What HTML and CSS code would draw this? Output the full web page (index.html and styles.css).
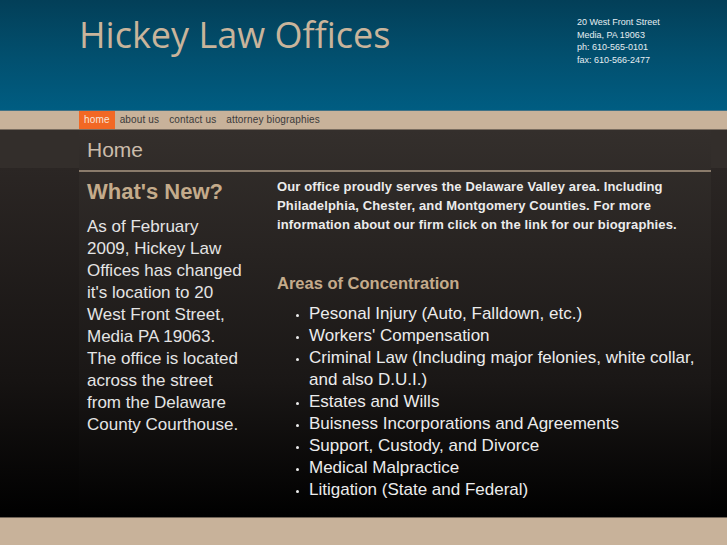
FILE: index.html
```html
<!DOCTYPE html>
<html lang="en">
<head>
    <meta charset="UTF-8">
    <meta name="viewport" content="width=device-width, initial-scale=1.0">
    <title>Hickey Law Offices</title>
    <link rel="stylesheet" href="styles.css">
</head>
<body>

<div class="header">
    <div class="wrap header-inner">
        <h1>Hickey Law Offices</h1>
        <div class="address">
            20 West Front Street<br>
            Media, PA 19063<br>
            ph: 610-565-0101<br>
            fax: 610-566-2477
        </div>
    </div>
</div>

<div class="nav">
    <ul class="wrap menu">
        <li class="active"><a href="#">home</a></li>
        <li><a href="#">about us</a></li>
        <li><a href="#">contact us</a></li>
        <li><a href="#">attorney biographies</a></li>
    </ul>
</div>

<div class="main">
    <div class="wrap content">
        <h2 class="page-title">Home</h2>
        <div class="columns">
            <div class="news">
                <h3>What's New?</h3>
                <p>As of February<br>2009, Hickey Law Offices has changed it's location to 20 West Front Street, Media PA 19063.<br>The office is located across the street from the Delaware County Courthouse.</p>
            </div>
            <div class="body">
                <p class="intro">Our office proudly serves the Delaware Valley area. Including Philadelphia, Chester, and Montgomery Counties. For more information about our firm click on the link for our biographies.</p>
                <h3>Areas of Concentration</h3>
                <ul class="areas">
                    <li>Pesonal Injury (Auto, Falldown, etc.)</li>
                    <li>Workers' Compensation</li>
                    <li>Criminal Law (Including major felonies, white collar, and also D.U.I.)</li>
                    <li>Estates and Wills</li>
                    <li>Buisness Incorporations and Agreements</li>
                    <li>Support, Custody, and Divorce</li>
                    <li>Medical Malpractice</li>
                    <li>Litigation (State and Federal)</li>
                </ul>
            </div>
        </div>
    </div>
</div>

<div class="footer"></div>

</body>
</html>
```

FILE: styles.css
```css
body {
    margin: 0;
    font-family: 'Liberation Sans', Arial, sans-serif;
    background-color: #c8b29a;
}
.wrap {
    margin-left: 79px;
    width: 632px;
}
.header {
    height: 110px;
    background: linear-gradient(#033f58, #024f6e 50%, #005d82);
}
.header-inner {
    display: flex;
    justify-content: space-between;
}
.header h1 {
    margin: 0;
    padding: 10px 0 0 0;
    font-family: 'Open Sans', sans-serif;
    font-weight: normal;
    font-size: 36px;
    color: #c9b49b;
}
.header .address {
    width: 134px;
    padding-top: 16px;
    font-size: 9px;
    line-height: 12.6px;
    color: #e6eef2;
}
.nav {
    background-color: #c8b29a;
    border-top: 1px solid #3f7186;
    border-bottom: 1px solid #7a6d60;
}
.menu {
    display: flex;
    list-style: none;
    margin-top: 0;
    margin-bottom: 0;
    padding: 0;
}
.menu a {
    display: block;
    padding: 0 5px;
    line-height: 18px;
    font-size: 10px;
    letter-spacing: 0.15px;
    color: #3a3a3a;
    text-decoration: none;
}
.menu .active a {
    background-color: #f26824;
    color: #f8e6da;
}
.main {
    height: 387px;
    background: linear-gradient(#332e2b 38px, #2b2624 38px, #161312 65%, #000000);
    border-bottom: 1px solid #6f6357;
}
.content {
    height: 100%;
    background: linear-gradient(#342f2c, #1a1716 65%, #000000);
}
.page-title {
    margin: 0;
    height: 40px;
    padding: 0 8px;
    line-height: 40px;
    font-size: 21px;
    font-weight: normal;
    color: #cbbcab;
    border-bottom: 2px solid #8a7b6b;
}
.columns {
    display: flex;
}
.news {
    flex: none;
    width: 160px;
    padding: 0 30px 0 8px;
    color: #e4e4e4;
}
.news h3 {
    margin: 7px 0 11px;
    font-size: 22px;
    line-height: 26px;
    color: #c4ab8b;
}
.news p {
    margin: 0;
    font-size: 17px;
    line-height: 22px;
}
.body {
    flex: none;
    width: 434px;
    color: #ececec;
}
.body .intro {
    margin: 5px 0 0;
    font-size: 13px;
    font-weight: bold;
    letter-spacing: 0.14px;
    line-height: 19px;
}
.body h3 {
    margin: 39px 0 10px;
    font-size: 16.5px;
    line-height: 20px;
    color: #c4ab8b;
}
.areas {
    margin: 0;
    padding-left: 32px;
    font-size: 17px;
    line-height: 22px;
}
.areas li::marker {
    font-size: 10px;
}
.footer {
    height: 27px;
}
```
